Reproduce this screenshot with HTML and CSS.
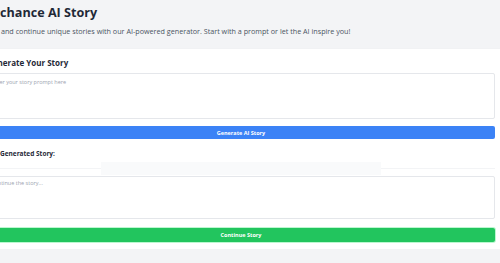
FILE: index.html
```html
<!DOCTYPE html>
<html>
<head>
    <title>Perchance AI Story</title>
    <link rel="stylesheet" href="styles.css">
</head>
<body>
    <div class="page">
        <header class="header">
            <h1>Perchance AI Story</h1>
            <p class="subtitle">Create and continue unique stories with our AI-powered generator. Start with a prompt or let the AI inspire you!</p>
        </header>

        <div class="card">
            <h2>Generate Your Story</h2>
            <textarea class="prompt" placeholder="Enter your story prompt here"></textarea>
            <button class="btn btn-generate">Generate AI Story</button>

            <h3>Your Generated Story:</h3>
            <div class="output">
                <div class="output-placeholder"></div>
            </div>
            <textarea class="continue" placeholder="Continue the story..."></textarea>
            <button class="btn btn-continue">Continue Story</button>
        </div>
    </div>
</body>
</html>
```

FILE: styles.css
```css
body {
    font-family: "Open Sans", Arial, sans-serif;
    background-color: #f3f4f6;
    margin: 0;
    padding: 0;
    overflow: hidden;
}

.page {
    width: 528px;
    margin-left: -23px;
}

.header {
    padding: 3px 0 13px 0;
}

h1 {
    margin: 0 0 0 2px;
    font-size: 12.6px;
    line-height: 20px;
    font-weight: 700;
    color: #1f2937;
}

.subtitle {
    margin: 3px 0 0 0;
    font-size: 7.2px;
    line-height: 10px;
    color: #4b5563;
}

.card {
    background-color: #fff;
    padding: 8px 10px 7px 10px;
    box-shadow: 0 1px 2px rgba(0, 0, 0, 0.12);
    display: flex;
    flex-direction: column;
}

h2 {
    margin: 0;
    font-size: 8px;
    line-height: 12px;
    font-weight: 700;
    color: #1f2937;
}

textarea {
    box-sizing: border-box;
    width: 100%;
    border: 1px solid #e5e7eb;
    border-radius: 2px;
    font-family: "Open Sans", Arial, sans-serif;
    font-size: 5.5px;
    line-height: 8px;
    color: #374151;
    padding: 4px 3px;
    margin: 0;
    outline: none;
    resize: none;
}

textarea::placeholder {
    color: #9ca3af;
}

.prompt {
    margin-top: 4px;
    height: 46px;
}

.continue {
    margin-top: 1px;
    height: 43px;
    padding-top: 2px;
}

.btn {
    border: none;
    border-radius: 2px;
    color: #fff;
    font-family: "Open Sans", Arial, sans-serif;
    font-size: 5.5px;
    font-weight: 700;
    padding: 0;
    cursor: pointer;
}

.btn-generate {
    margin-top: 7px;
    height: 13px;
    background-color: #3b82f6;
}

.btn-continue {
    margin-top: 9px;
    height: 14px;
    background-color: #22c55e;
    box-shadow: 0 0 0 1px #bbf7d0;
}

h3 {
    margin: 10px 0 0 -4px;
    font-size: 6.5px;
    line-height: 10px;
    font-weight: 700;
    color: #1f2937;
}

.output {
    margin-top: 3px;
    height: 13px;
    display: flex;
    justify-content: center;
    align-items: center;
    background: linear-gradient(#fff 6px, #f3f4f6 6px, #f3f4f6 7px, #fff 7px);
}

.output-placeholder {
    width: 280px;
    height: 13px;
    background-color: #f9fafb;
}
```
